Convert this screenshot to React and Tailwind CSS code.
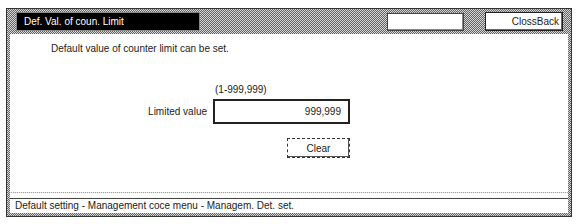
export default function App() {
  const dither = "bg-[repeating-conic-gradient(#666_0_25%,#d4d4d4_0_50%)] bg-[length:2px_2px]";
  return (
    <div className="w-[576px] h-[224px] bg-white pt-[8px] pl-[6px] font-['Liberation_Sans',Arial,sans-serif] text-[10px] text-[#222]">
      <div className={`w-[566px] h-[209px] border border-[#333] p-[3px] pt-0 flex flex-col ${dither}`}>
        <div className="h-[25px] flex items-center pl-[6px] pr-[5px]">
          <div className="w-[184px] h-[19px] bg-black border border-[#888] flex items-center pl-[7px] text-white text-[10px]">
            Def. Val. of coun. Limit
          </div>
          <div className="flex-1" />
          <div className="w-[77px] h-[18px] bg-white border border-[#444] shadow-[inset_-1px_-1px_0_#888]" />
          <div className="w-[21px]" />
          <div className="w-[78px] h-[19px] bg-white border border-[#222] shadow-[inset_-1px_-1px_0_#666] flex items-center justify-end pr-[3px] text-[10px]">
            ClossBack
          </div>
        </div>
        <div className="flex-1 bg-white flex flex-col">
          <div className="pl-[41px] pt-[9px] leading-[12px]">Default value of counter limit can be set.</div>
          <div className="pl-[205px] pt-[29px] leading-[12px]">(1-999,999)</div>
          <div className="flex items-center pt-[3px]">
            <div className="w-[203px] text-right pr-[6px]">Limited value</div>
            <div className="w-[137px] h-[25px] border-2 border-[#222] flex items-center justify-end pr-[7px]">999,999</div>
          </div>
          <div className="flex pl-[277px] pt-[14px]">
            <div className="w-[63px] h-[20px] border border-dashed border-[#333] shadow-[inset_-1px_-1px_0_#555] flex items-center justify-center">
              Clear
            </div>
          </div>
          <div className="flex-1" />
          <div className={`h-[1px] ${dither} opacity-60`} />
          <div className="h-[5px]" />
          <div className="h-px bg-[#444]" />
          <div className="h-[14px] flex items-center pl-[5px] leading-[12px]">
            Default setting - Management coce menu - Managem. Det. set.
          </div>
        </div>
      </div>
    </div>
  );
}
